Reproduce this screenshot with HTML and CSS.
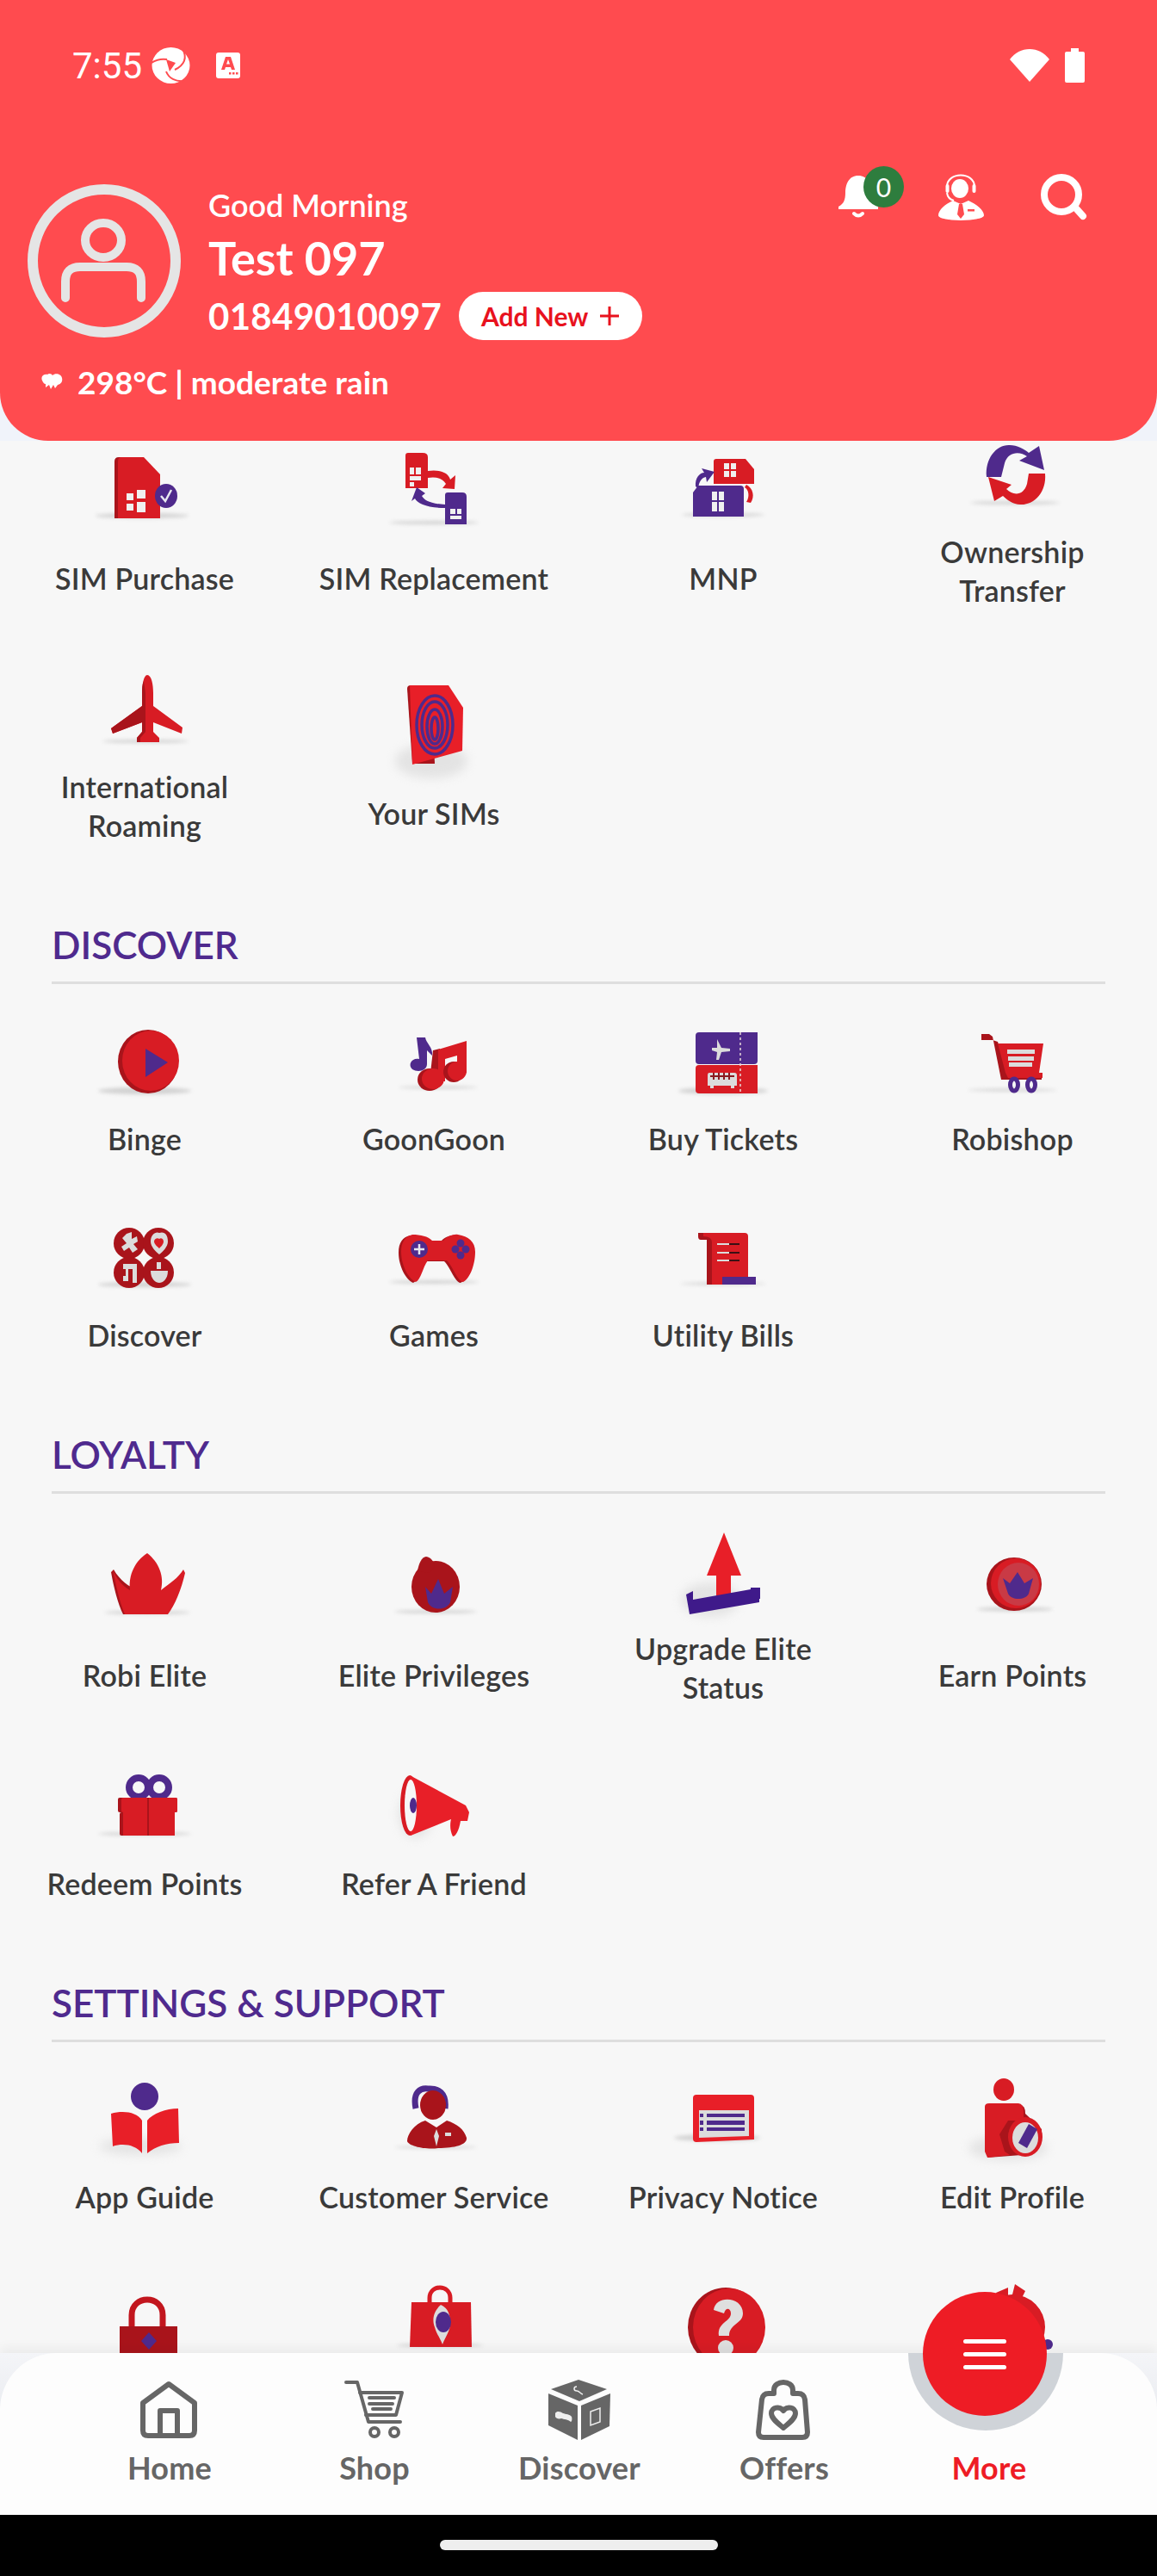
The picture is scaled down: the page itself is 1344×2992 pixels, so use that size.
FILE: index.html
```html
<!DOCTYPE html>
<html lang="en">

<head>
    <meta charset="UTF-8">
    <title>Robi More</title>
    <link rel="stylesheet" href="styles.css">
</head>

<body>
    <div class="screen">

        <!-- red header -->
        <div class="head-wrap">
            <header class="head">
                <div class="status">
                    <span class="clock">7:55</span>
                    <svg class="st-logo" viewBox="0 0 46 44">
                        <ellipse class="wh" cx="22.500" cy="22" rx="22" ry="21" />
                        <path class="hd" d="M17 15L28 19L21 29Z" />
                        <path class="hd-ln" d="M0 19C6 15 12 14 18 15" />
                        <path class="hd-ln" d="M36 3C42 13 38 22 27 27" />
                        <path class="hd-ln" d="M17 29C20 37 28 41 38 40" />
                    </svg>
                    <svg class="st-a" viewBox="0 0 28 30">
                        <rect class="wh" width="28" height="30" rx="3" />
                        <path class="hd" d="M11 5H17L22 20H18L17 17H11L10 20H6ZM12 13.500H16L14 8Z" />
                        <path class="hd" d="M15 23h2.500v2.500H15zM19 23h2.500v2.500H19zM23 23h2.500v2.500H23z" />
                    </svg>
                    <svg class="st-wifi" viewBox="0 0 46 38">
                        <path class="wh" d="M23 38L0 12C6 4 14 0 23 0S40 4 46 12Z" />
                    </svg>
                    <svg class="st-bat" viewBox="0 0 23 40">
                        <path class="wh" d="M7 0H16V4H21Q23 4 23 6V38Q23 40 21 40H2Q0 40 0 38V6Q0 4 2 4H7Z" />
                    </svg>
                </div>

                <div class="profile">
                    <svg class="avatar" viewBox="0 0 180 180">
                        <circle class="av-line" cx="90" cy="90" r="83" stroke-width="12" />
                        <ellipse class="av-line" cx="89" cy="66" rx="21" ry="20" stroke-width="10" />
                        <path class="av-line" d="M45 133V114Q45 97 62 97H116Q133 97 133 114V133" stroke-width="10" stroke-linecap="round" />
                    </svg>
                    <div class="who">
                        <div class="greet">Good Morning</div>
                        <div class="name">Test 097</div>
                        <div class="num-row">
                            <span class="num">01849010097</span>
                            <span class="add-btn">Add New
                                <svg class="add-plus" viewBox="0 0 22 22">
                                    <path d="M11 0V22M0 11H22" />
                                </svg>
                            </span>
                        </div>
                    </div>
                    <div class="head-icons">
                        <div class="bell">
                            <svg class="bell-ico" viewBox="0 0 48 52">
                                <path class="wh" d="M24 0C13 0 9 10 9 20C9 28 7 33 1 36V39H47V36C41 33 39 28 39 20C39 10 35 0 24 0Z" />
                                <path class="bell-cl" d="M19 44Q24 49 29 44" />
                            </svg>
                            <span class="badge">0</span>
                        </div>
                        <svg class="agent" viewBox="0 0 53 54">
                            <path class="ln-w" d="M10 15C10 -3 42 -3 42 15" />
                            <rect class="wh" x="8.500" y="12" width="4" height="10" rx="2" />
                            <rect class="wh" x="39.500" y="12" width="4" height="10" rx="2" />
                            <path class="ln-w" d="M10 22Q11 29 18 31" />
                            <ellipse class="wh" cx="25" cy="17" rx="10" ry="11" />
                            <path class="wh" d="M17 31C8 35 0 42 0 48C0 52 14 54 26 54S53 52 53 48C53 42 44 35 35 31L26 35Z" />
                            <path class="hd" d="M24 35H28L30 47L26 52L22 47Z" />
                            <rect class="hd" x="34" y="41" width="8" height="2.500" />
                        </svg>
                        <svg class="search" viewBox="0 0 56 54">
                            <circle class="ln-w2" cx="25" cy="24" r="20" />
                            <path class="ln-w2" d="M41 39L50 49" />
                        </svg>
                    </div>
                </div>

                <div class="weather">
                    <svg class="w-ico" viewBox="0 0 26 20">
                        <path class="wh" d="M2 9C0 4 4 1 8 2C10 0 13 1 14 3C17 0 24 1 25 6C26 10 24 13 20 14L17 18L15 14L12 19L10 14L6 17L6 13C4 13 3 11 2 9Z" />
                    </svg>
                    <span>298°C | moderate rain</span>
                </div>
            </header>
        </div>

        <!-- scrolled list of services -->
        <main class="scroller">
            <div class="scroll-in">

                <section class="tiles">
                    <div class="tile nudge">
                        <svg class="ico" viewBox="0 0 130 130">
                            <ellipse class="sh" cx="62" cy="80" rx="54" ry="3" />
                            <path class="d" d="M30 17Q30 12 35 12H62L79 32V83H30Z" />
                            <path class="r" d="M34 17Q34 12 38 12H64L83 32V83H34Z" />
                            <path class="bg" d="M44 54H52V62H44ZM44 66H52V74H44ZM56 50H66V60H56ZM56 64H66V76H56Z" />
                            <ellipse class="p" cx="90" cy="57" rx="13" ry="14" />
                            <path class="ln-w3" d="M84 57L89 63L96 50" />
                        </svg>
                        <span class="tile-label">SIM Purchase</span>
                    </div>
                    <div class="tile nudge">
                        <svg class="ico" viewBox="0 0 130 130">
                            <ellipse class="sh" cx="65" cy="88" rx="52" ry="2" />
                            <path class="r" d="M32 10Q32 7 35 7H52Q58 7 58 12V48H32Z" />
                            <path class="bg" d="M37 24H42V32H37ZM44 24H50V32H44ZM37 34H50V39H37ZM37 41H42V46H37Z" />
                            <path class="r" d="M58 28C72 26 82 30 84 38L90 33L89 49L75 48L79 43C75 37 68 34 58 36Z" />
                            <path class="p" d="M45 47L55 54L51 57C54 62 60 66 78 67V71C58 71 46 66 43 60L39 63Z" />
                            <path class="p" d="M78 56Q78 53 81 53H98Q103 53 103 58V90H78Z" />
                            <path class="bg" d="M84 72H90V78H84ZM92 72H97V78H92ZM84 80H97V84H84Z" />
                        </svg>
                        <span class="tile-label">SIM Replacement</span>
                    </div>
                    <div class="tile nudge">
                        <svg class="ico" viewBox="0 0 130 130">
                            <ellipse class="sh" cx="65" cy="79" rx="48" ry="2" />
                            <path class="r" d="M54 17Q54 14 57 14H91L101 26V43H54Z" />
                            <path class="bg" d="M66 19H72V26H66ZM74 19H80V26H74ZM66 28H72V35H66ZM74 28H80V35H74Z" />
                            <path class="p" d="M33 46C32 36 38 30 43 30L40 25L55 29L46 41L45 35C40 36 37 40 36 48Z" />
                            <path class="r" d="M92 44C100 48 102 58 97 65L92 64C96 58 95 50 90 47Z" />
                            <path class="p" d="M36 45H85Q89 45 89 49V81H30V53Z" />
                            <path class="bg" d="M52 52H58V62H52ZM60 52H66V62H60ZM52 64H58V75H52ZM60 64H66V75H60Z" />
                        </svg>
                        <span class="tile-label">MNP</span>
                    </div>
                    <div class="tile">
                        <svg class="ico" viewBox="0 0 130 130">
                            <ellipse class="sh" cx="68" cy="96" rx="52" ry="2" />
                            <path class="p" d="M35 66C33 44 47 28 62 29C70 29 80 34 84 38L96 30L102 58L73 47L82 42C74 36 60 36 56 50L52 66Z" />
                            <path class="r" d="M103 62C105 84 90 99 74 98C66 98 58 92 54 88L44 94L37 66L64 75L58 80C66 88 78 88 82 74L84 62Z" />
                        </svg>
                        <span class="tile-label">Ownership<br>Transfer</span>
                    </div>

                    <div class="tile">
                        <svg class="ico" viewBox="0 0 130 130">
                            <ellipse class="sh" cx="66" cy="100" rx="50" ry="2" />
                            <path class="r" d="M68 23C73 23 75 34 75 44V59L109 84L108 91L75 78V89L82 96V101H56V96L62 89V78L28 91L26 85L62 59V44C62 34 64 23 68 23Z" />
                            <path class="d" d="M64 30C62 34 62 40 62 44V59L26 85L28 91L62 78V89L56 96V101H60V96L66 89V44Z" />
                        </svg>
                        <span class="tile-label">International<br>Roaming</span>
                    </div>
                    <div class="tile nudge">
                        <svg class="ico" viewBox="0 0 130 130">
                            <ellipse class="sh-soft" cx="62" cy="92" rx="42" ry="20" />
                            <path class="d" d="M34 8Q34 4 38 4H62L66 95L40 95Z" />
                            <path class="r2" d="M37 4H82L99 30L98 80L40 96Z" />
                            <g class="fp">
                                <ellipse cx="66" cy="50" rx="21" ry="34" />
                                <ellipse cx="66" cy="50" rx="15" ry="27" />
                                <ellipse cx="66" cy="52" rx="9" ry="20" />
                                <ellipse cx="66" cy="54" rx="4" ry="13" />
                            </g>
                        </svg>
                        <span class="tile-label">Your SIMs</span>
                    </div>
                </section>

                <section class="sect">
                    <h2 class="sect-title">DISCOVER</h2>
                    <div class="tiles">
                        <div class="tile">
                            <svg class="ico" viewBox="0 0 130 130">
                                <ellipse class="sh" cx="65" cy="97" rx="54" ry="4" />
                                <ellipse class="d" cx="69" cy="63" rx="35" ry="37" />
                                <ellipse class="r" cx="72" cy="62" rx="33" ry="35" />
                                <path class="p" d="M66 48L92 64L66 81Z" />
                            </svg>
                            <span class="tile-label">Binge</span>
                        </div>
                        <div class="tile">
                            <svg class="ico" viewBox="0 0 130 130">
                                <ellipse class="sh" cx="70" cy="93" rx="46" ry="1.500" />
                                <path class="p" d="M45 35H55C56 42 64 46 63 56L57 50V66C57 74 46 76 40 72C34 66 40 58 48 60Z" />
                                <path class="d" d="M64 50L72 48V85H60Z" />
                                <path class="r" d="M70 49L103 39V76H92V56L78 60V86H70Z" />
                                <ellipse class="d" cx="60" cy="84" rx="14" ry="13" />
                                <ellipse class="r" cx="64" cy="83" rx="13" ry="12" />
                                <ellipse class="d" cx="88" cy="75" rx="12" ry="12" />
                                <ellipse class="r" cx="92" cy="74" rx="11" ry="11" />
                            </svg>
                            <span class="tile-label">GoonGoon</span>
                        </div>
                        <div class="tile">
                            <svg class="ico" viewBox="0 0 130 130">
                                <ellipse class="sh" cx="65" cy="97" rx="52" ry="4" />
                                <path class="p" d="M37 29H105V62Q105 66 101 66H37Q33 66 33 62V33Q33 29 37 29Z" />
                                <path class="r" d="M37 67H105V100H37Q33 100 33 96V71Q33 67 37 67Z" />
                                <path class="lt" d="M58 37L63 47L73 48V51L63 52L60 61L57 61L58 52L52 50L52 47L58 47Z" />
                                <path class="lt" d="M49 76H78Q81 76 81 79V91H78V94H74V91H54V94H50V91H47V79Q47 76 49 76Z" />
                                <path class="bg-ln" d="M50 80H78M54 76V84M60 76V84M66 76V84M72 76V84" />
                                <path class="dash" d="M85 29V100" />
                            </svg>
                            <span class="tile-label">Buy Tickets</span>
                        </div>
                        <div class="tile">
                            <svg class="ico" viewBox="0 0 130 130">
                                <ellipse class="sh" cx="65" cy="96" rx="52" ry="1.500" />
                                <path class="d" d="M29 31H38L42 34L52 84H99V76H60L48 40L42 38H29Z" />
                                <path class="r" d="M48 42H101L96 76H100V82H60L57 76Z" />
                                <path class="lt" d="M59 49H91V54H59ZM60 57H90V62H60ZM61 64H88V69H61Z" />
                                <ellipse class="p-ln" cx="67" cy="90" rx="4.500" ry="7" />
                                <ellipse class="p-ln" cx="87" cy="90" rx="4.500" ry="7" />
                            </svg>
                            <span class="tile-label">Robishop</span>
                        </div>

                        <div class="tile">
                            <svg class="ico" viewBox="0 0 130 130">
                                <ellipse class="sh" cx="65" cy="94" rx="54" ry="3" />
                                <ellipse class="d" cx="47" cy="46" rx="18" ry="18" />
                                <ellipse class="d" cx="81" cy="46" rx="18" ry="18" />
                                <ellipse class="d" cx="47" cy="80" rx="18" ry="18" />
                                <ellipse class="d" cx="81" cy="80" rx="18" ry="18" />
                                <path class="lt" d="M44 35L50 33L50 41L56 38L57 44L52 47L57 53L51 57L47 51L41 55L38 50L44 46L39 40Z" />
                                <path class="lt" d="M82 34C88 32 92 36 92 44C92 50 86 56 82 59C78 56 72 50 72 44C72 36 78 32 82 34Z" />
                                <path class="r" d="M82 41C84 39 87 41 87 44C87 47 84 50 82 52C80 50 76 47 76 44C76 41 80 39 82 41Z" />
                                <path class="lt" d="M40 70H56V92H51V76H46V90H40V84H43V76H40Z" />
                                <path class="lt" d="M72 78H92C92 88 86 92 82 92C78 92 72 88 72 78ZM79 68H84V76H79Z" />
                            </svg>
                            <span class="tile-label">Discover</span>
                        </div>
                        <div class="tile">
                            <svg class="ico" viewBox="0 0 130 130">
                                <ellipse class="sh" cx="65" cy="91" rx="52" ry="2" />
                                <path class="d" transform="translate(-3 1)" d="M40 36C50 36 58 38 63 43H76C80 38 88 35 93 36C105 38 113 44 113 56C113 72 106 88 99 91C92 90 88 74 80 66H58C52 74 50 88 44 91C36 88 27 72 27 56C27 44 32 38 40 36Z" />
                                <path class="r" d="M40 36C50 36 58 38 63 43H76C80 38 88 35 93 36C105 38 113 44 113 56C113 72 106 88 99 91C92 90 88 74 80 66H58C52 74 50 88 44 91C36 88 27 72 27 56C27 44 32 38 40 36Z" />
                                <circle class="p" cx="48" cy="53" r="10" />
                                <path class="ln-w3" d="M48 47V59M42 53H54" />
                                <circle class="p" cx="96" cy="46" r="4.500" />
                                <circle class="p" cx="90" cy="53" r="4.500" />
                                <circle class="p" cx="102" cy="53" r="4.500" />
                                <circle class="p" cx="96" cy="60" r="4.500" />
                            </svg>
                            <span class="tile-label">Games</span>
                        </div>
                        <div class="tile">
                            <svg class="ico" viewBox="0 0 130 130">
                                <ellipse class="sh" cx="65" cy="93" rx="50" ry="1.500" />
                                <path class="d" d="M36 34H52V94H46V42H39Q36 42 36 38Z" />
                                <path class="r" d="M42 34H90Q94 34 94 38V94H52V45Q52 38 42 38Z" />
                                <path class="lt" d="M58 46H72V48H58ZM58 56H72V58H58ZM58 65H72V67H58Z" />
                                <path class="blk" d="M72 46H84V48H72ZM72 56H84V58H72ZM72 65H84V67H72Z" />
                                <rect class="p" x="64" y="85" width="39" height="9" />
                            </svg>
                            <span class="tile-label">Utility Bills</span>
                        </div>
                    </div>
                </section>

                <section class="sect">
                    <h2 class="sect-title">LOYALTY</h2>
                    <div class="tiles">
                        <div class="tile nudge">
                            <svg class="ico" viewBox="0 0 130 130">
                                <ellipse class="sh" cx="68" cy="80" rx="50" ry="2" />
                                <path class="d" d="M26 33C29 50 34 70 40 82H70V60L56 52C48 52 36 42 29 30Z" />
                                <path class="r" d="M28 30C32 40 38 48 48 54C46 36 54 20 68 11C82 22 88 38 84 54C94 46 104 40 110 30L112 34C108 52 100 72 92 82H42C36 68 32 50 28 30Z" />
                            </svg>
                            <span class="tile-label">Robi Elite</span>
                        </div>
                        <div class="tile nudge">
                            <svg class="ico" viewBox="0 0 130 130">
                                <ellipse class="sh" cx="67" cy="79" rx="48" ry="2" />
                                <ellipse class="d" cx="67" cy="50" rx="28" ry="30" />
                                <path class="d" d="M46 32C47 24 51 15 56 15C62 16 66 22 66 26L60 34Z" />
                                <path class="p" d="M55 50L62 58L70 41L77 58L87 50L84 68C80 78 62 78 58 68Z" />
                            </svg>
                            <span class="tile-label">Elite Privileges</span>
                        </div>
                        <div class="tile">
                            <svg class="ico" viewBox="0 0 130 130">
                                <ellipse class="sh-soft" cx="50" cy="96" rx="34" ry="20" />
                                <path class="r2" d="M66 18L86 68H74V92L57 94V68H46Z" />
                                <path class="p2" d="M22 90L30 86V96L97 84V82H107V99L26 113Z" />
                                <path class="p2" d="M100 82H108V95H100Z" />
                            </svg>
                            <span class="tile-label">Upgrade Elite<br>Status</span>
                        </div>
                        <div class="tile nudge">
                            <svg class="ico" viewBox="0 0 130 130">
                                <ellipse class="sh" cx="68" cy="76" rx="44" ry="2.500" />
                                <ellipse class="d" cx="67" cy="47" rx="32" ry="31" />
                                <ellipse class="r" cx="69" cy="46" rx="29" ry="29" />
                                <ellipse class="rm" cx="72" cy="47" rx="24" ry="25" />
                                <path class="p" d="M54 40L62 46L71 33L79 46L89 40L84 58C80 66 64 66 60 58Z" />
                            </svg>
                            <span class="tile-label">Earn Points</span>
                        </div>

                        <div class="tile">
                            <svg class="ico" viewBox="0 0 130 130">
                                <ellipse class="sh" cx="65" cy="95" rx="54" ry="2" />
                                <ellipse class="p-bow" cx="58" cy="41" rx="11" ry="11" />
                                <ellipse class="p-bow" cx="82" cy="41" rx="11" ry="11" />
                                <rect class="d" x="34" y="53" width="69" height="17" rx="2" />
                                <rect class="r" x="38" y="53" width="65" height="17" rx="2" />
                                <rect class="d" x="36" y="70" width="64" height="27" rx="2" />
                                <rect class="r" x="40" y="70" width="60" height="27" />
                                <rect class="d" x="68" y="53" width="2" height="44" />
                            </svg>
                            <span class="tile-label">Redeem Points</span>
                        </div>
                        <div class="tile">
                            <svg class="ico" viewBox="0 0 130 130">
                                <ellipse class="sh-soft" cx="44" cy="72" rx="20" ry="28" />
                                <ellipse class="r" cx="37" cy="62" rx="11" ry="35" />
                                <path class="r2" d="M37 27L102 62L106 70L104 80L96 80C94 92 90 98 87 98C83 90 84 82 85 78L38 97Z" />
                                <ellipse class="wh2" cx="38" cy="62" rx="7" ry="30" />
                                <ellipse class="p" cx="41" cy="62" rx="4" ry="9" />
                            </svg>
                            <span class="tile-label">Refer A Friend</span>
                        </div>
                    </div>
                </section>

                <section class="sect">
                    <h2 class="sect-title">SETTINGS &amp; SUPPORT</h2>
                    <div class="tiles">
                        <div class="tile">
                            <svg class="ico" viewBox="0 0 130 130">
                                <ellipse class="sh-soft" cx="60" cy="94" rx="48" ry="10" />
                                <ellipse class="p" cx="65" cy="36" rx="16" ry="16" />
                                <path class="r2" d="M26 56C40 52 56 54 62 64V102C54 92 40 90 28 94Z" />
                                <path class="r2" d="M104 50L105 90C90 90 78 94 68 102V64C74 56 90 50 104 50Z" />
                            </svg>
                            <span class="tile-label">App Guide</span>
                        </div>
                        <div class="tile">
                            <svg class="ico" viewBox="0 0 130 130">
                                <ellipse class="sh" cx="67" cy="95" rx="48" ry="1.500" />
                                <path class="p-hs" d="M44 50C40 30 50 26 58 27C70 26 80 32 78 50" />
                                <ellipse class="d" cx="64" cy="46" rx="15" ry="17" />
                                <path class="d" d="M55 64C42 68 34 80 34 88C36 94 56 98 70 96C90 96 104 92 103 84C100 74 92 68 80 64L68 72Z" />
                                <path class="lt" d="M68 74L71 82L68 94L65 82Z" />
                                <rect class="lt" x="78" y="78" width="7" height="4" />
                            </svg>
                            <span class="tile-label">Customer Service</span>
                        </div>
                        <div class="tile">
                            <svg class="ico" viewBox="0 0 130 130">
                                <ellipse class="sh" cx="58" cy="84" rx="50" ry="4" />
                                <path class="r2" d="M34 34H97Q101 34 101 38V86L34 89Q30 89 30 85V38Q30 34 34 34Z" />
                                <path class="lt" d="M37 52H95V82L37 84Z" />
                                <path class="p" d="M46 56H90V60H46ZM46 64H90V69H46ZM46 72H90V76H46ZM38 56H42V60H38ZM38 64H42V69H38ZM38 72H42V76H38Z" />
                            </svg>
                            <span class="tile-label">Privacy Notice</span>
                        </div>
                        <div class="tile">
                            <svg class="ico" viewBox="0 0 130 130">
                                <ellipse class="sh-soft" cx="60" cy="96" rx="46" ry="14" />
                                <ellipse class="r" cx="55" cy="28" rx="12" ry="13" />
                                <path class="d" d="M36 46H74Q80 46 80 56L99 74C100 90 88 104 76 104L36 107Z" />
                                <path class="r" d="M33 48Q33 44 38 44H72Q78 44 78 54V64H60L50 80L56 100L62 104L36 107L33 100Z" />
                                <ellipse class="r" cx="80" cy="83" rx="20" ry="23" />
                                <ellipse class="lt" cx="80" cy="84" rx="15" ry="18" />
                                <path class="p" d="M84 68L94 74L82 96L72 90Z" />
                            </svg>
                            <span class="tile-label">Edit Profile</span>
                        </div>

                        <div class="tile">
                            <svg class="ico" viewBox="0 0 130 130">
                                <path class="r-ln" d="M50 76V62C50 38 86 38 86 62V76" />
                                <rect class="d" x="36" y="75" width="67" height="55" />
                                <path class="p" d="M70 82L79 92L70 102L61 92Z" />
                            </svg>
                        </div>
                        <div class="tile">
                            <svg class="ico" viewBox="0 0 130 130">
                                <ellipse class="sh" cx="72" cy="97" rx="50" ry="2" />
                                <path class="r-ln2" d="M60 52V42C60 26 84 26 84 42V52" />
                                <path class="r" d="M39 47H108L109 99H37Z" />
                                <path class="lt" d="M73 50C66 56 62 66 66 76C68 84 72 88 75 96C78 88 84 80 84 72C84 62 82 54 73 50Z" />
                                <ellipse class="p" cx="76" cy="70" rx="9" ry="12" />
                            </svg>
                        </div>
                        <div class="tile">
                            <svg class="ico" viewBox="0 0 130 130">
                                <ellipse class="d" cx="68" cy="76" rx="44" ry="46" />
                                <ellipse class="r" cx="72" cy="76" rx="42" ry="45" />
                                <path class="q" d="M54 56C56 38 88 40 88 60C88 72 72 72 72 86H60C58 70 74 70 74 60C74 54 68 52 66 60Z" />
                                <ellipse class="q" cx="68" cy="100" rx="9" ry="9" />
                            </svg>
                        </div>
                        <div class="tile">
                            <svg class="ico" viewBox="0 0 130 130">
                                <circle class="r" cx="65" cy="76" r="38" />
                                <path class="r" d="M46 36L60 30L60 44L48 48ZM68 26L80 34L74 46L64 42Z" />
                                <circle class="p" cx="106" cy="96" r="6" />
                            </svg>
                        </div>
                    </div>
                </section>
            </div>
        </main>

        <!-- bottom tabs -->
        <div class="nav-wrap">
            <nav class="nav">
                <div class="tab">
                    <svg class="tab-ico" viewBox="0 0 72 72">
                        <path class="tab-ln" d="M5 28L35 6L65 28V60Q65 66 59 66H11Q5 66 5 60Z" />
                        <path class="tab-ln" d="M25 66V37H45V66" />
                    </svg>
                    <span class="tab-label">Home</span>
                </div>
                <div class="tab">
                    <svg class="tab-ico" viewBox="0 0 72 72">
                        <path class="tab-ln2" d="M3 4H16L29 50H66" />
                        <path class="tab-ln2" d="M19 16H68L61 42H26" />
                        <path class="tab-ln2" d="M30 22H59M30 29H57M34 35H55" />
                        <circle class="tab-ln2" cx="36" cy="62" r="5" />
                        <circle class="tab-ln2" cx="59" cy="62" r="5" />
                    </svg>
                    <span class="tab-label">Shop</span>
                </div>
                <div class="tab">
                    <svg class="tab-ico" viewBox="0 0 72 72">
                        <path class="tab-fill" d="M35 1L68 12L36 26L3 12Z" />
                        <path class="tab-fill" d="M0 17L34 31V71L0 54Z" />
                        <path class="tab-fill" d="M72 17L38 31V71L71 55Z" />
                        <path class="nav-thin" d="M33 9C29 9 29 14 33 14C36 14 37 17 40 18" />
                        <path class="nav-cut" d="M8 40C10 37 14 38 17 40C20 41 25 41 27 44C28 47 27 50 26 50C23 47 18 47 15 46C12 47 9 46 8 44Z" />
                        <path class="nav-thin" d="M49 38L60 34V50L49 54Z" />
                    </svg>
                    <span class="tab-label">Discover</span>
                </div>
                <div class="tab">
                    <svg class="tab-ico" viewBox="0 0 72 72">
                        <path class="tab-ln" d="M24 17V13C24 1 46 1 46 13V17H52Q59 17 60 24L63 62Q63 68 57 68H12Q6 68 6 62L10 24Q11 17 18 17Z" />
                        <path class="tab-ln" d="M35 57C28 51 21 46 21 40C21 33 31 31 35 37C39 31 49 33 49 40C49 46 42 51 35 57Z" />
                    </svg>
                    <span class="tab-label">Offers</span>
                </div>
                <div class="tab">
                    <div class="tab-ico"></div>
                    <span class="tab-label tab-on">More</span>
                </div>
                <div class="halo"></div>
                <div class="fab">
                    <i></i><i></i><i></i>
                </div>
            </nav>
        </div>

        <div class="sysbar"><div class="pill"></div></div>
    </div>
</body>

</html>
```

FILE: styles.css
```css
* {
    margin: 0;
    padding: 0;
    box-sizing: border-box;
}

body {
    width: 1344px;
    height: 2992px;
    overflow: hidden;
    font-family: "Lato", "Noto Sans", sans-serif;
    background-color: #f7f7f7;
}

.screen {
    width: 1344px;
    height: 2992px;
    display: flex;
    flex-direction: column;
}

/* header */
.head-wrap {
    height: 512px;
    background-color: #f0f3fa;
    flex: none;
}

.head {
    height: 512px;
    background-color: #ff4b4f;
    border-radius: 0 0 56px 56px;
    color: #fff;
    overflow: hidden;
}

.status {
    display: flex;
    align-items: center;
    height: 48px;
    margin-top: 52px;
    padding: 0 84px;
}

.clock {
    font-family: "Roboto", sans-serif;
    font-size: 42px;
    width: 92px;
    flex: none;
}

.st-logo {
    width: 46px;
    height: 44px;
}

.st-a {
    width: 28px;
    height: 30px;
    margin-left: 29px;
}

.st-wifi {
    width: 46px;
    height: 38px;
    margin-left: auto;
}

.st-bat {
    width: 23px;
    height: 40px;
    margin-left: 18px;
}

.wh {
    fill: #fff;
}

.hd {
    fill: #ff4b4f;
}

.hd-ln {
    fill: none;
    stroke: #ff4b4f;
    stroke-width: 2;
}

.profile {
    display: flex;
    align-items: flex-start;
    margin-top: 93px;
    padding: 0 80px 0 31px;
}

.avatar {
    width: 180px;
    height: 180px;
    margin-top: 20px;
    flex: none;
}

.av-line {
    fill: none;
    stroke: #e5e5e5;
}

.who {
    margin: 20px 0 0 31px;
}

.greet {
    font-size: 36px;
    font-weight: 600;
    line-height: 50px;
}

.name {
    font-size: 54px;
    font-weight: 700;
    line-height: 74px;
}

.num-row {
    display: flex;
    align-items: center;
    height: 56px;
    margin-top: 2px;
}

.num {
    font-size: 42px;
    font-weight: 700;
    letter-spacing: 0.3px;
    width: 291px;
}

.add-btn {
    display: flex;
    align-items: center;
    gap: 14px;
    width: 213px;
    height: 56px;
    padding-left: 26px;
    border-radius: 28px;
    background-color: #fff;
    color: #e8121e;
    font-size: 30px;
    font-weight: 700;
}

.add-plus {
    width: 22px;
    height: 22px;
    fill: none;
    stroke: #e8121e;
    stroke-width: 3;
}

.head-icons {
    display: flex;
    align-items: flex-start;
    margin-left: auto;
}

.bell {
    position: relative;
    width: 77px;
    height: 61px;
}

.bell-ico {
    position: absolute;
    left: 0;
    top: 11px;
    width: 48px;
    height: 52px;
}

.bell-cl {
    fill: none;
    stroke: #fff;
    stroke-width: 4;
    stroke-linecap: round;
}

.badge {
    position: absolute;
    right: 0;
    top: 0;
    width: 47px;
    height: 48px;
    border-radius: 50%;
    background-color: #2e7d3e;
    color: #fff;
    font-size: 30px;
    font-weight: 400;
    line-height: 48px;
    text-align: center;
}

.agent {
    width: 53px;
    height: 54px;
    margin: 9px 0 0 40px;
}

.ln-w {
    fill: none;
    stroke: #fff;
    stroke-width: 2;
}

.ln-w2 {
    fill: none;
    stroke: #fff;
    stroke-width: 8;
    stroke-linecap: round;
}

.ln-w3 {
    fill: none;
    stroke: #e8e8f0;
    stroke-width: 2.500;
}

.search {
    width: 56px;
    height: 54px;
    margin: 9px 0 0 65px;
}

.weather {
    display: flex;
    align-items: center;
    gap: 17px;
    height: 50px;
    margin-top: 23px;
    padding-left: 47px;
    font-size: 37px;
    font-weight: 700;
}

.w-ico {
    width: 26px;
    height: 20px;
}

/* scroll area */
.scroller {
    flex: 1;
    min-height: 0;
    overflow: hidden;
    background-color: #f7f7f7;
}

.scroll-in {
    margin-top: -24px;
}

.tiles {
    display: grid;
    grid-template-columns: repeat(4, 336px);
    row-gap: 53px;
    align-items: center;
}

.tile {
    display: flex;
    flex-direction: column;
    align-items: center;
}

/* single line tiles in a row with a two line tile sit a bit lower */
.nudge {
    margin-top: 16px;
}

.ico {
    display: block;
    width: 130px;
    height: 130px;
    overflow: visible;
}

.tile-label {
    font-size: 34px;
    font-weight: 600;
    letter-spacing: 0.2px;
    line-height: 45px;
    text-align: center;
    color: #3a3a3a;
}

.sect {
    margin-top: 91px;
}

.sect-title {
    margin: 0 60px 27px;
    padding-bottom: 18px;
    border-bottom: 3px solid #dedede;
    font-size: 44px;
    font-weight: 600;
    line-height: 50px;
    color: #4f2a8e;
}

/* icon colours */
.r {
    fill: #d81c24;
}

.r2 {
    fill: #e81f28;
}

.rm {
    fill: #c93a45;
}

.d {
    fill: #a9141b;
}

.p {
    fill: #4f2a8c;
}

.p2 {
    fill: #3f1a8a;
}

.lt {
    fill: #dcdcdc;
}

.blk {
    fill: #3a1014;
}

.q {
    fill: #dfdfdf;
}

.bg {
    fill: #f0f0f0;
}

.wh2 {
    fill: #f7f7f7;
}

.sh {
    fill: #8c8c8c;
    opacity: 0.35;
    filter: blur(2px);
}

.sh-soft {
    fill: #cccccc;
    opacity: 0.45;
    filter: blur(6px);
}

.fp ellipse {
    fill: none;
    stroke: #4f2a8c;
    stroke-width: 3.500;
}

.bg-ln {
    fill: none;
    stroke: #8a1a20;
    stroke-width: 2;
}

.dash {
    fill: none;
    stroke: #e8d8d8;
    stroke-width: 1.500;
    stroke-dasharray: 3 3;
}

.p-ln {
    fill: none;
    stroke: #4f2a8c;
    stroke-width: 5;
}

.p-bow {
    fill: none;
    stroke: #4f2a8c;
    stroke-width: 8;
}

.p-hs {
    fill: none;
    stroke: #4f2a8c;
    stroke-width: 7;
}

.r-ln {
    fill: none;
    stroke: #c2161e;
    stroke-width: 7;
}

.r-ln2 {
    fill: none;
    stroke: #d81c24;
    stroke-width: 5;
}

/* bottom nav */
.nav-wrap {
    flex: none;
    height: 188px;
    background: linear-gradient(#f4f5f8, #d9dde4);
    box-shadow: 0 -6px 12px rgba(0, 0, 0, 0.05);
    position: relative;
}

.nav {
    position: relative;
    display: flex;
    height: 188px;
    padding: 30px 0 0 78px;
    border-radius: 66px 66px 0 0;
    background-color: #fdfdfd;
}

.tab {
    width: 238px;
    display: flex;
    flex-direction: column;
    align-items: center;
}

.tab-ico {
    display: block;
    width: 72px;
    height: 72px;
}

.tab-ln {
    fill: none;
    stroke: #666;
    stroke-width: 6;
    stroke-linejoin: round;
}

.tab-ln2 {
    fill: none;
    stroke: #666;
    stroke-width: 4;
    stroke-linecap: round;
    stroke-linejoin: round;
}

.tab-fill {
    fill: #666;
}

.nav-cut {
    fill: #eee;
}

.nav-thin {
    fill: none;
    stroke: #eee;
    stroke-width: 1.500;
}

.tab-label {
    margin-top: 9px;
    font-size: 36px;
    font-weight: 700;
    letter-spacing: 0.2px;
    line-height: 44px;
    color: #666;
}

.tab-on {
    color: #ee1c25;
}

.halo {
    position: absolute;
    left: 1055px;
    top: -90px;
    width: 180px;
    height: 180px;
    border-radius: 50%;
    background-color: #cfd3d8;
    clip-path: inset(50% 0 0 0);
}

.fab {
    position: absolute;
    left: 1072px;
    top: -71px;
    width: 144px;
    height: 144px;
    border-radius: 50%;
    background-color: #ee1c25;
    display: flex;
    flex-direction: column;
    align-items: center;
    justify-content: center;
    gap: 10px;
}

.fab i {
    display: block;
    width: 50px;
    height: 5px;
    border-radius: 3px;
    background-color: #fff;
}

.sysbar {
    flex: none;
    height: 71px;
    background-color: #000;
    display: flex;
    justify-content: center;
    padding-top: 29px;
}

.pill {
    width: 323px;
    height: 12px;
    border-radius: 6px;
    background-color: #eee;
}
```
